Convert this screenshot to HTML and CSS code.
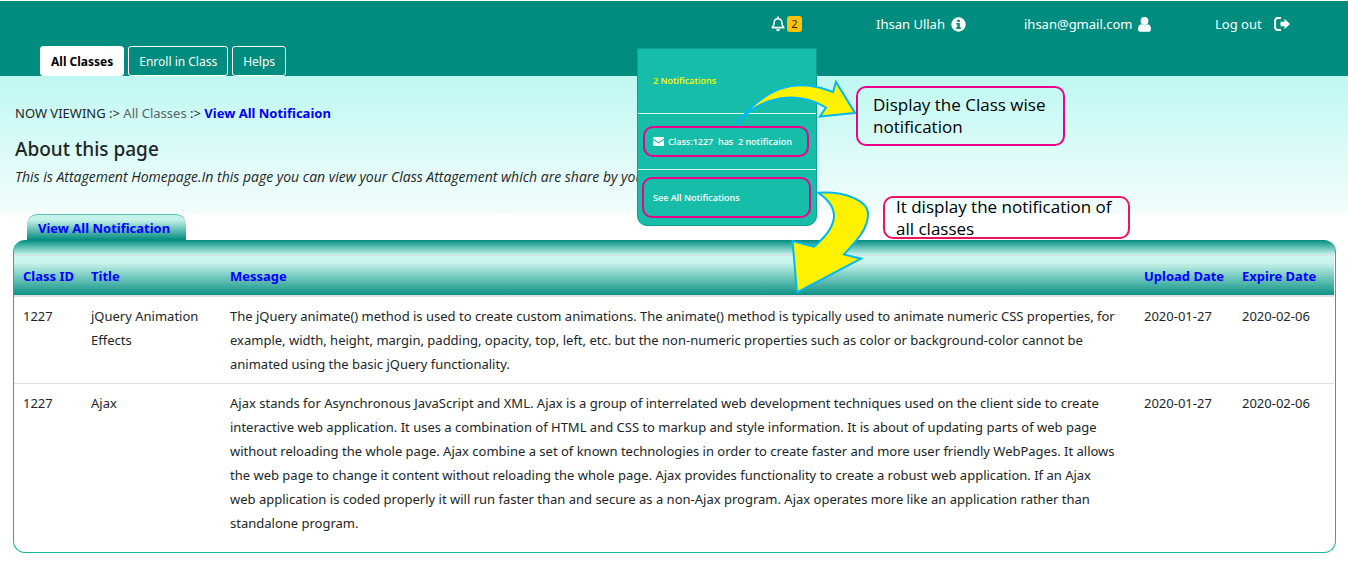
FILE: index.html
```html
<!DOCTYPE html>
<html lang="en">
<head>
<meta charset="utf-8">
<title>View All Notification</title>
<link rel="stylesheet" href="styles.css">
</head>
<body>
<header class="topbar">
  <ul class="account">
    <li class="bell-item">
      <button class="bell" type="button" aria-label="Notifications">
        <svg width="14" height="16" viewBox="0 0 14 16" fill="none" stroke="#fff" stroke-width="1.6"><path d="M7 0.5v2M1.2 11.6c1.8-1.7 1.9-3.4 2-5.3C3.400 3.900 4.800 2.700 7 2.700s3.600 1.200 3.800 3.600c.1 1.900.2 3.600 2 5.300z" stroke-linejoin="round"/><path d="M5 13.200h4a2 2 0 0 1-4 0z" fill="#fff" stroke="none"/></svg>
        <span class="badge">2</span>
      </button>
      <div class="dropdown">
        <p class="dropdown-title">2 Notifications</p>
        <div class="dropdown-row">
          <a class="ring" href="#"><svg width="11" height="9" viewBox="0 0 11 9" fill="#fff"><path d="M1 0h9a1 1 0 0 1 1 1v.6L5.500 5.200 0 1.600V1a1 1 0 0 1 1-1z"/><path d="M0 2.800l5.500 3.600L11 2.800V8a1 1 0 0 1-1 1H1a1 1 0 0 1-1-1z"/></svg><span class="notice">Class:1227  has  2 notificaion</span></a>
        </div>
        <div class="dropdown-row last">
          <a class="ring tall" href="#">See All Notifications</a>
        </div>
      </div>
    </li>
    <li><a href="#">Ihsan Ullah <svg class="info" width="15" height="15" viewBox="0 0 15 15"><circle cx="7.500" cy="7.500" r="7.200" fill="#fff"/><path d="M6.200 2.700h2.600v2.200H6.200zM5.300 6h3.500v4.300h1v1.600H5.300v-1.600h1V7.600h-1z" fill="#008c7e"/></svg></a></li>
    <li><a href="#">ihsan@gmail.com <svg width="13" height="15" viewBox="0 0 13 15" fill="#fff"><circle cx="6.500" cy="4" r="3.900"/><path d="M3.400 7.300c2 1.400 4.200 1.400 6.200 0 2.500.4 3.400 2.300 3.400 5 0 1.500-.8 2.400-2.200 2.400H2.200C.8 14.700 0 13.800 0 12.300c0-2.700.9-4.600 3.400-5z"/></svg></a></li>
    <li><a href="#">Log out <svg class="exit" width="16" height="14" viewBox="0 0 16 14"><path d="M7 1.100H4A2.900 2.900 0 0 0 1.100 4v6A2.900 2.900 0 0 0 4 12.900h3" fill="none" stroke="#fff" stroke-width="2"/><path d="M6.500 4.800h4V1.700L16 7l-5.500 5.300V9.200h-4z" fill="#fff"/></svg></a></li>
  </ul>
  <nav class="tabs">
    <a class="tab active" href="#">All Classes</a>
    <a class="tab" href="#">Enroll in Class</a>
    <a class="tab" href="#">Helps</a>
  </nav>
</header>
<section class="intro">
  <p class="crumbs">NOW VIEWING :&gt; <a href="#">All Classes</a> :&gt; <b>View All Notificaion</b></p>
  <h1>About this page</h1>
  <p class="lead">This is Attagement Homepage.In this page you can view your Class Attagement which are share by you</p>
</section>
<main class="content">
  <h2 class="panel-tab">View All Notification</h2>
  <div class="panel">
    <table>
      <colgroup><col class="c-id"><col class="c-title"><col><col class="c-upload"><col class="c-expire"></colgroup>
      <thead><tr><th>Class ID</th><th>Title</th><th>Message</th><th>Upload Date</th><th>Expire Date</th></tr></thead>
      <tbody>
        <tr><td>1227</td><td>jQuery Animation Effects</td><td class="message">The jQuery animate() method is used to create custom animations. The animate() method is typically used to animate numeric CSS properties, for example, width, height, margin, padding, opacity, top, left, etc. but the non-numeric properties such as color or background-color cannot be animated using the basic jQuery functionality.</td><td>2020-01-27</td><td>2020-02-06</td></tr>
        <tr><td>1227</td><td>Ajax</td><td class="message">Ajax stands for Asynchronous JavaScript and XML. Ajax is a group of interrelated web development techniques used on the client side to create interactive web application. It uses a combination of HTML and CSS to markup and style information. It is about of updating parts of web page without reloading the whole page. Ajax combine a set of known technologies in order to create faster and more user friendly WebPages. It allows the web page to change it content without reloading the whole page. Ajax provides functionality to create a robust web application. If an Ajax web application is coded properly it will run faster than and secure as a non-Ajax program. Ajax operates more like an application rather than standalone program.</td><td>2020-01-27</td><td>2020-02-06</td></tr>
      </tbody>
    </table>
  </div>
</main>
<aside class="notes">
  <svg class="arrows" width="140" height="220" viewBox="730 78 140 220" fill="#fff200" stroke="#00b9f2" stroke-width="2">
    <path d="M737 123.500C758 96 783 82 811 86C819 87 826 89 833 92L836 82L855 113L820 116.500L826 107.500C808 97 789 95 770 101C757 105 746 113 737 123.500z"/>
    <path d="M818 192.700C846 191 868 201 868 214C868 229 857 240 844 254.500L861 258.700L797 292.500L792.500 241L814 246.700C835 229 844 210 818 192.700z"/>
  </svg>
  <p class="note first">Display the Class wise notification</p>
  <p class="note second">It display the notification of all classes</p>
</aside>
</body>
</html>
```
FILE: styles.css
```css
* { box-sizing: border-box; }
body {
  position: relative;
  margin: 0;
  padding-top: 1px;
  background: #fff;
  color: #212529;
  font: 13px/24px "Noto Sans", "Open Sans", sans-serif;
}
p, h1, h2, ul { margin: 0; padding: 0; }
a { color: inherit; text-decoration: none; }

.topbar { background: #008c7e; color: #fff; }
.account {
  display: grid;
  grid-template-columns: 105px 148px 191px 75px;
  justify-content: end;
  padding: 11px 58px 10px 0;
  list-style: none;
}
.account li { white-space: nowrap; }
.account li > a { display: flex; align-items: center; gap: 5px; }
.account .info { margin-left: 1px; }
.account .exit { margin-left: 7px; }
.bell-item { position: relative; }
.bell {
  display: flex;
  align-items: center;
  gap: 2px;
  height: 24px;
  padding: 0;
  border: 0;
  background: none;
  font: inherit;
}
.badge {
  width: 15px;
  height: 16px;
  border-radius: 3px;
  background: #ffc107;
  color: #212529;
  font-size: 11px;
  line-height: 16px;
}
.dropdown {
  position: absolute;
  top: 36px;
  right: 59px;
  z-index: 1;
  width: 180px;
  border: 1px solid #109e8c;
  border-radius: 0 0 10px 10px;
  background: #16bda8;
  font: 600 9px/20px "Open Sans", sans-serif;
}
.dropdown-title { padding: 22px 15px; color: #ff0; }
.dropdown-row { padding: 12px 7px 12px 5px; border-top: 1px solid #e4f7f4; }
.dropdown-row.last { padding: 7px 5px 7px 4px; }
.ring {
  display: flex;
  align-items: center;
  gap: 4px;
  height: 31px;
  padding: 0 8px;
  border: 2px solid #ec008c;
  border-radius: 10px;
}
.ring.tall { height: 41px; padding: 0 9px; }
.notice { white-space: pre; }

.tabs { display: flex; gap: 4px; padding: 0 40px; font-size: 12px; }
.tab {
  height: 30px;
  padding: 0 10px;
  border: 1px solid #fff;
  border-radius: 3px;
  line-height: 29px;
}
.tab.active { background: #fff; color: #000; font-weight: 700; }

.intro {
  height: 138px;
  padding: 25px 15px;
  background: linear-gradient(#bff8f1, #f3fdfc);
}
.crumbs a { color: #5c6266; }
.crumbs b { color: #00f; }
h1 { margin-top: 11px; font-size: 19px; font-weight: 500; line-height: 26px; }
.lead { margin-top: 3px; font-family: "Open Sans", sans-serif; font-size: 14px; font-style: italic; }

.content { padding: 0 12px 15px 13px; }
.panel-tab {
  width: max-content;
  min-width: 159px;
  margin-left: 14px;
  padding: 2px 11px 0;
  border-top: 1px solid #5ec4b6;
  border-radius: 10px 10px 0 0;
  background: linear-gradient(#c4f1e8 20%, #008c7e);
  color: #00f;
  font-size: 13px;
  line-height: 23px;
}
.panel {
  padding: 15px 1px 10px 0;
  border: 1px solid #16b5a2;
  border-top: 0;
  border-radius: 12px;
  background: linear-gradient(#008c7e, #c8f5ec) top / 100% 15px no-repeat #fff;
}
table { width: 100%; border-collapse: collapse; table-layout: fixed; }
.c-id { width: 68px; }
.c-title { width: 139px; }
.c-upload { width: 98px; }
.c-expire { width: 101px; }
th, td { padding: 7px 9px; text-align: left; vertical-align: top; border-top: 1px solid #dee2e6; }
.message { padding-right: 18px; }
thead tr { background: linear-gradient(#cbf6ed 15%, #008c7e); }
th { padding: 8px 9px 7px; border-bottom: 2px solid #dee2e6; color: #00f; white-space: nowrap; }

.notes { color: #000; font: 17px/22px "Open Sans", sans-serif; }
.arrows { position: absolute; top: 78px; left: 730px; z-index: 2; }
.note { position: absolute; z-index: 2; }
.note.first {
  top: 86px;
  left: 856px;
  width: 209px;
  padding: 6px 15px;
  border: 2px solid #ec008c;
  border-radius: 10px;
}
.note.second {
  display: flex;
  align-items: center;
  top: 196px;
  left: 883px;
  width: 247px;
  height: 43px;
  padding: 0 11px;
  border: 2px solid #ed145b;
  border-radius: 10px;
}
```
